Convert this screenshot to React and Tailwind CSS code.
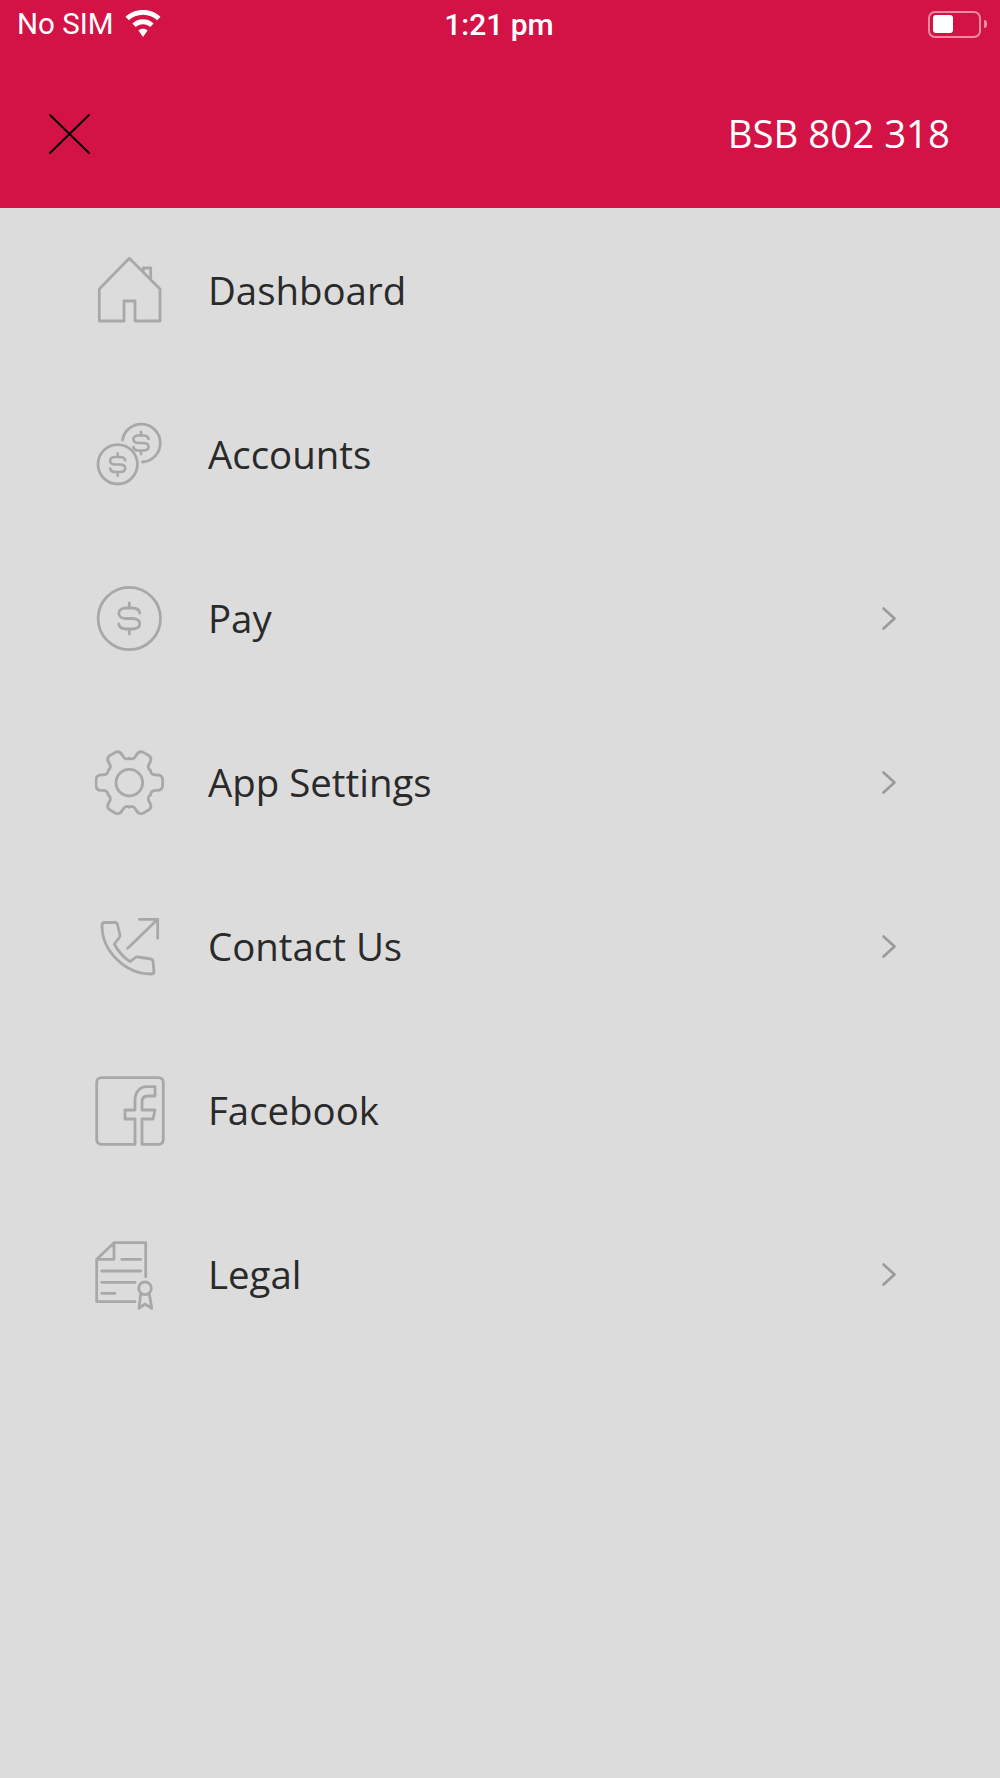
import React from 'react';

function Dollar({ x, y, s = 1, width = 2.8 }) {
  return (
    <g transform={`translate(${x} ${y}) scale(${s})`} strokeWidth={width / s}>
      <path d="M10.5 -5.5C10 -8.8 7 -10.5 3 -10.5H-3C-7.5 -10.5 -10.5 -8.5 -10.5 -5.3C-10.5 -2 -7.5 0 -3 0H3C7.5 0 10.5 2 10.5 5.3C10.5 8.5 7.5 10.5 3 10.5H-3C-7 10.5 -10 8.8 -10.5 5.5M0 -15.5V-10.5M0 10.5V15.5" />
    </g>
  );
}

function gearPath(cx, cy) {
  const pt = (deg, r) => {
    const a = (deg * Math.PI) / 180;
    return `${(cx + r * Math.cos(a)).toFixed(2)} ${(cy + r * Math.sin(a)).toFixed(2)}`;
  };
  let d = `M${pt(-30, 24.5)}`;
  for (let k = 0; k < 6; k++) {
    const a = k * 60;
    d += ` Q${pt(a - 20, 22.5)} ${pt(a - 16, 28)}`;
    d += ` Q${pt(a - 14, 33.5)} ${pt(a - 6, 33.5)}`;
    d += ` L${pt(a + 6, 33.5)}`;
    d += ` Q${pt(a + 14, 33.5)} ${pt(a + 16, 28)}`;
    d += ` Q${pt(a + 20, 22.5)} ${pt(a + 30, 24.5)}`;
  }
  return d + 'Z';
}

const icons = {
  house: (
    <path d="M34.3 3.3L65 34V66H40V46H29V66H4.3V34ZM48.3 17.3V13H55.7V24" />
  ),
  coins: (
    <>
      <circle cx="22.7" cy="45.3" r="19.7" />
      <path d="M27.5 21A19 19 0 1 1 47.5 43" />
      <Dollar x={22.7} y={45.5} s={0.72} width={2.6} />
      <Dollar x={46} y={24} s={0.72} width={2.6} />
    </>
  ),
  pay: (
    <>
      <circle cx="34.3" cy="35.5" r="31.2" />
      <Dollar x={34.3} y={35.5} s={1} />
    </>
  ),
  gear: (
    <>
      <path d={gearPath(34.3, 35.7)} />
      <circle cx="34.3" cy="35.7" r="13.3" />
    </>
  ),
  phone: (
    <path d="M32.7 37.3L62.7 8.3M44.3 8.3H62.7V27.3M10 11.5H20Q22 11.5 22.5 13.5L25 24Q25 26 24 27L19.3 33Q25 44 35 50.7L40.5 46.5Q41.5 45.5 43 46L56 48Q58 48.5 58 50.5L59 60.5Q59 63 56 63C30 63 7 40 7 14.5Q7 11.5 10 11.5Z" />
  ),
  facebook: (
    <path d="M40 69.3H6.7Q1.7 69.3 1.7 64.3V7.7Q1.7 2.7 6.7 2.7H63.3Q68.3 2.7 68.3 7.7V64.3Q68.3 69.3 63.3 69.3H47V44H58L60 35H47V27Q47 21 53 21H60V11.7H52C45 11.7 40 17 40 25V35H30V44H40Z" />
  ),
  legal: (
    <>
      <path d="M40 62.7H1.7V20.3L19 3.7H50.7V37.7M19 3.7V20.3H1.7M26.7 20.3H45.7M6.7 32H45.7M6.7 43.3H40M6.7 54.3H20" />
      <circle cx="50" cy="49.3" r="6.3" />
      <path d="M45.5 56L44 69.3L50 65L56.7 69.3L54.5 56" />
    </>
  ),
};

const items = [
  { label: 'Dashboard', icon: 'house' },
  { label: 'Accounts', icon: 'coins' },
  { label: 'Pay', icon: 'pay', more: true },
  { label: 'App Settings', icon: 'gear', more: true },
  { label: 'Contact Us', icon: 'phone', more: true },
  { label: 'Facebook', icon: 'facebook' },
  { label: 'Legal', icon: 'legal', more: true },
];

function MenuRow({ label, icon, more }) {
  return (
    <div className="flex h-[164px] items-center pl-[95px] pr-[104px]">
      <svg
        width="72"
        height="72"
        viewBox="0 0 72 72"
        fill="none"
        stroke="#a8a8a8"
        strokeWidth="2.8"
        strokeLinejoin="round"
        strokeLinecap="round"
        className="mt-[1px] shrink-0"
      >
        {icons[icon]}
      </svg>
      <span className="ml-[41px] flex-1 text-[38.4px] leading-none text-[#2a2a2a]">{label}</span>
      {more && (
        <svg width="14" height="24" viewBox="0 0 14 24" fill="none" stroke="#9a9a9a" strokeWidth="2.6" strokeLinecap="round" strokeLinejoin="round" className="mt-[2px]">
          <path d="M1.5 1.5L12.5 11.5L1.5 21.5" />
        </svg>
      )}
    </div>
  );
}

export default function App() {
  return (
    <div className="flex h-[1778px] w-[1000px] flex-col bg-[#dcdcdc] font-['Open_Sans',sans-serif]">
      <header className="flex h-[208px] flex-col bg-[#d31345] text-white">
        <div className="relative flex h-[52px] items-center justify-between pb-[3px] pl-[17px] pr-[13px] font-['Roboto',sans-serif] text-[29.5px]">
          <div className="flex items-center gap-[12px]">
            <span>No SIM</span>
            <svg width="36" height="28" viewBox="0 0 33 27" fill="white" preserveAspectRatio="none" className="-mt-[2px]">
              <path d="M16.5 0C10 0 4.5 2.5 0.5 6.5L3.5 10C6.8 6.7 11.3 4.7 16.5 4.7S26.2 6.7 29.5 10L32.5 6.5C28.5 2.5 23 0 16.5 0Z" />
              <path d="M16.5 9C12.7 9 9.4 10.5 6.8 13L9.8 16.5C11.5 14.8 13.9 13.7 16.5 13.7S21.5 14.8 23.2 16.5L26.2 13C23.6 10.5 20.3 9 16.5 9Z" />
              <path d="M16.5 18C14.9 18 13.4 18.6 12.3 19.7L16.5 26L20.7 19.7C19.6 18.6 18.1 18 16.5 18Z" />
            </svg>
          </div>
          <span className="absolute left-0 right-0 pr-[2px] text-center text-[30px] font-medium">1:21 pm</span>
          <div className="-mt-[1px] flex items-center gap-[3px]">
            <div className="flex h-[27px] w-[53px] items-center rounded-[7px] border-2 border-[#ee8aa0] pl-[3px]">
              <div className="h-[18px] w-[20px] rounded-[3px] bg-white" />
            </div>
            <div className="h-[8px] w-[3px] rounded-r-full bg-[#ee8aa0]" />
          </div>
        </div>
        <div className="flex flex-1 items-center justify-between pl-[49px] pr-[50px] pt-[8px]">
          <svg width="41" height="40" viewBox="0 0 41 40" fill="none" stroke="black" strokeWidth="1.9" strokeLinecap="round">
            <path d="M1 1L40 39M40 1L1 39" />
          </svg>
          <span className="-mt-[2px] text-[38.4px] leading-none">BSB 802 318</span>
        </div>
      </header>
      <nav className="flex flex-col">
        {items.map((item) => (
          <MenuRow key={item.label} {...item} />
        ))}
      </nav>
    </div>
  );
}
